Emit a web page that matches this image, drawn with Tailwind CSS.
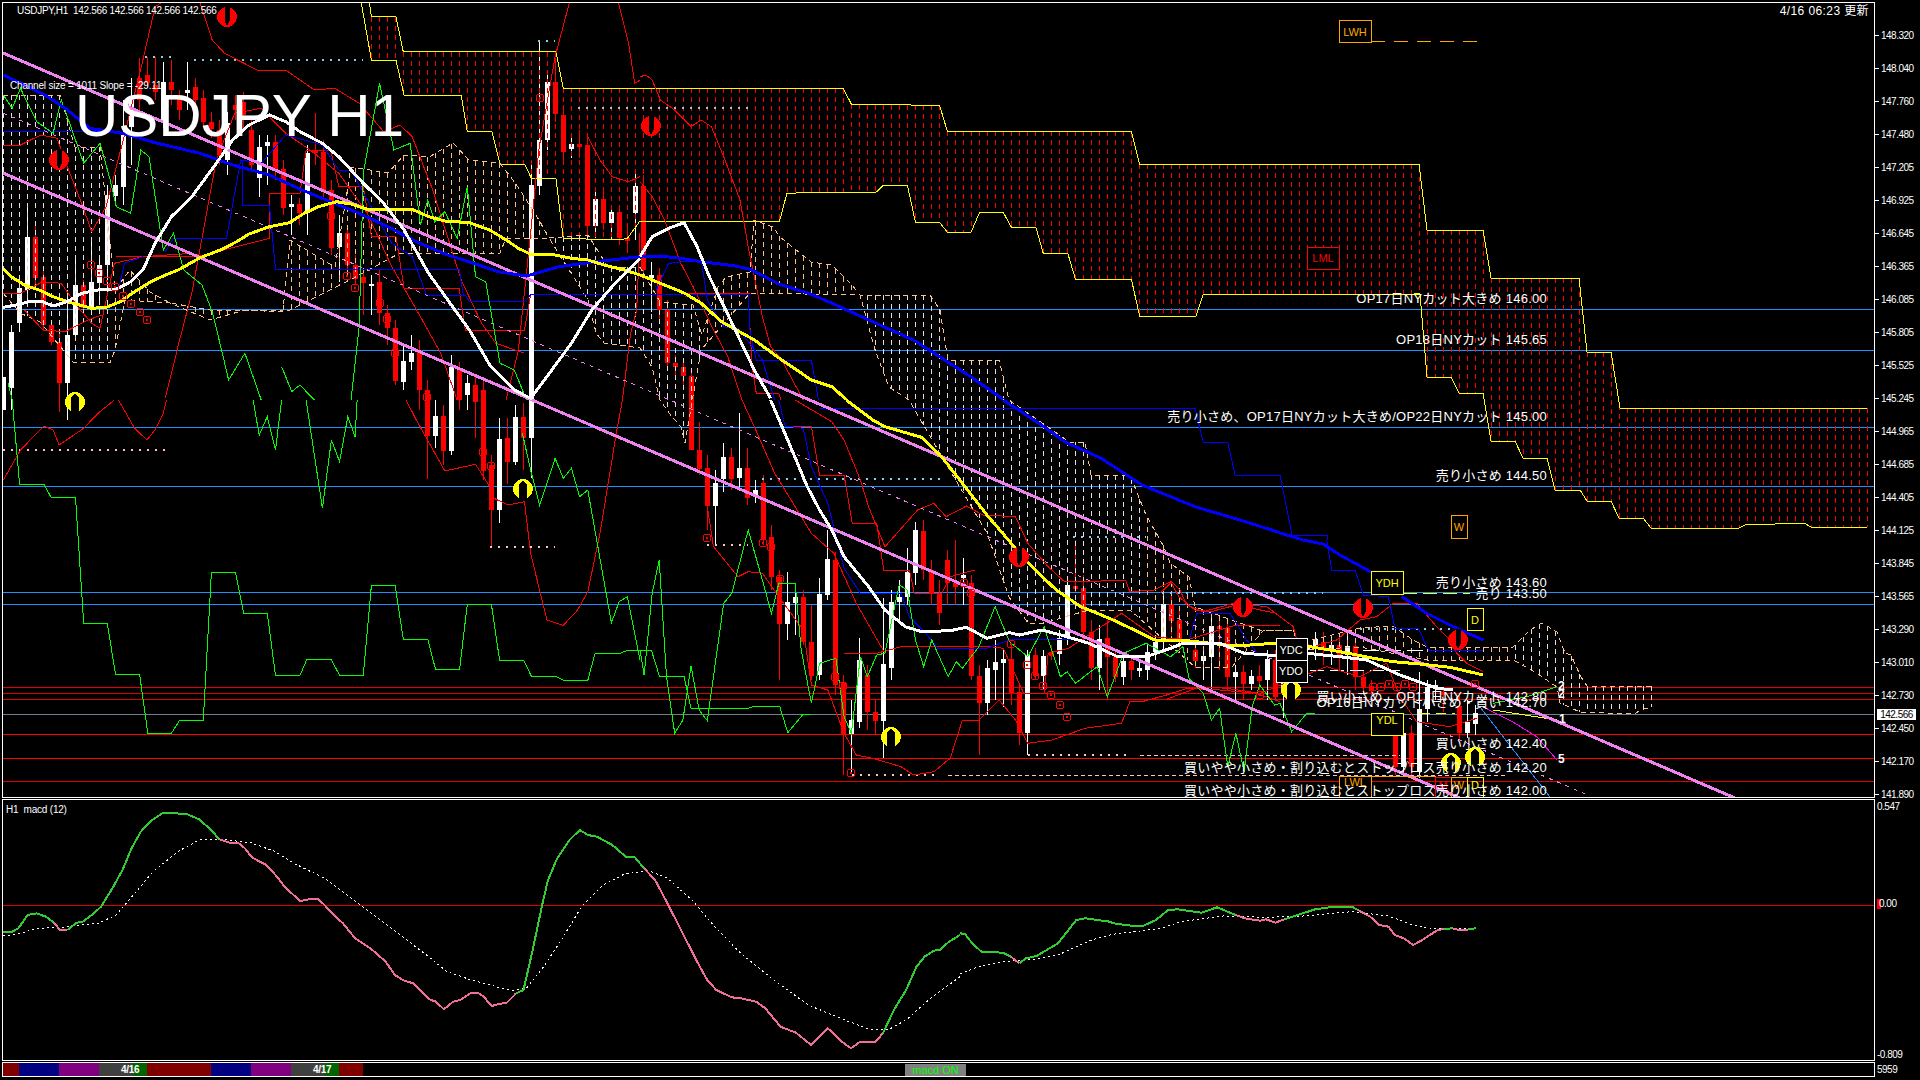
<!DOCTYPE html>
<html lang="ja">
<head>
  <meta charset="UTF-8">
  <title>USDJPY H1</title>
  <script src="https://cdn.jsdelivr.net/npm/@tailwindcss/browser@4"></script>
</head>
<body class="bg-black overflow-hidden font-['Liberation_Sans','Noto_Sans_CJK_JP',sans-serif] text-white">
  <div class="w-[1920px] h-[1080px] pt-[2px] pl-[2px] flex flex-col gap-px">

    <!-- price pane -->
    <div class="flex h-[796px]">
      <div class="w-[1873px] h-[796px] border border-white overflow-hidden">
        <svg id="price" width="1871" height="794" viewBox="3 3 1871 794" class="block [shape-rendering:crispEdges]">
          <g id="priceLayer"></g>
          <!-- boxes -->
          <g class="text-[10px]" fill="#000" stroke-width="1">
            <rect x="1339.5" y="20.5" width="32" height="22" stroke="#ffa500"/>
            <rect x="1307.5" y="247.5" width="32" height="22" stroke="#ff0000"/>
            <rect x="1451.5" y="515.5" width="16" height="23" stroke="#ffa500"/>
            <rect x="1371.5" y="571.5" width="32" height="23" stroke="#ffff00"/>
            <rect x="1467.5" y="608.5" width="16" height="22" stroke="#ffff00"/>
            <rect x="1276.5" y="638.5" width="31" height="22" stroke="#ffffff"/>
            <rect x="1276.5" y="660.5" width="31" height="22" stroke="#ffffff"/>
            <rect x="1371.5" y="713.5" width="32" height="22" stroke="#ffff00"/>
            <rect x="1339.5" y="776.5" width="32" height="24" stroke="#ffa500"/>
            <rect x="1371.5" y="776.5" width="64" height="24" fill="none" stroke="#ffa500"/>
            <rect x="1435.5" y="777.5" width="16" height="24" fill="none" stroke="#ff0000"/>
            <rect x="1451.5" y="777.5" width="16" height="24" fill="none" stroke="#ffa500"/>
            <rect x="1467.5" y="777.5" width="16" height="24" fill="none" stroke="#ffff00"/>
          </g>
          <g class="text-[11px]" text-anchor="middle">
            <text x="1355" y="36" fill="#ffa500">LWH</text>
            <text x="1323" y="262" fill="#ff0000">LML</text>
            <text x="1459" y="531" fill="#ffa500">W</text>
            <text x="1387" y="587" fill="#ffff00">YDH</text>
            <text x="1475" y="624" fill="#ffff00">D</text>
            <text x="1291" y="654" fill="#ffffff">YDC</text>
            <text x="1291" y="675" fill="#ffffff">YDO</text>
            <text x="1387" y="724" fill="#ffff00">YDL</text>
            <text x="1355" y="786" fill="#ffa500">LWL</text>
            <text x="1443" y="789" fill="#ff0000">M</text>
            <text x="1459" y="789" fill="#ffa500">W</text>
            <text x="1475" y="789" fill="#ffff00">D</text>
          </g>
          <!-- order levels -->
          <g class="text-[13px] tracking-[0.25px]" text-anchor="end" fill="#fff">
            <text x="1547" y="303">OP17日NYカット大きめ 146.00</text>
            <text x="1547" y="344">OP18日NYカット 145.65</text>
            <text x="1547" y="421">売り小さめ、OP17日NYカット大きめ/OP22日NYカット 145.00</text>
            <text x="1547" y="480">売り小さめ 144.50</text>
            <text x="1547" y="587">売り小さめ 143.60</text>
            <text x="1547" y="598">売り 143.50</text>
            <text x="1547" y="701">買い小さめ、OP17日NYカット 142.80</text>
            <text x="1547" y="707">OP16日NYカット小さめ・買い 142.70</text>
            <text x="1547" y="748">買い小さめ 142.40</text>
            <text x="1547" y="772">買いやや小さめ・割り込むとストップロス売り小さめ 142.20</text>
            <text x="1547" y="795">買いやや小さめ・割り込むとストップロス売り小さめ 142.00</text>
          </g>
          <g class="text-[12px] font-bold" fill="#fff">
            <text x="1558" y="690">2</text>
            <text x="1558" y="698">2</text>
            <text x="1559" y="723">1</text>
            <text x="1558" y="763">5</text>
          </g>
          <text x="75" y="136" fill="#fff" class="text-[60px]">USDJPY H1</text>
          <text x="10" y="89" fill="#fff" class="text-[10px] tracking-[-0.2px]">Channel size = 1011 Slope = -29.11</text>
          <text x="17" y="14" fill="#fff" class="text-[10px] tracking-[-0.3px]" xml:space="preserve">USDJPY,H1  142.566 142.566 142.566 142.566</text>
          <text x="1869" y="15" fill="#fff" text-anchor="end" class="text-[12px] tracking-[0.4px]">4/16 06:23 更新</text>
        </svg>
      </div>
      <div class="relative w-[45px] pt-[17px] text-[10px] tracking-[-0.5px] leading-none">
        <div class="flex items-center h-[33px]"><span class="w-[4px] h-px bg-white mr-[2px]"></span>148.320</div>
        <div class="flex items-center h-[33px]"><span class="w-[4px] h-px bg-white mr-[2px]"></span>148.040</div>
        <div class="flex items-center h-[33px]"><span class="w-[4px] h-px bg-white mr-[2px]"></span>147.760</div>
        <div class="flex items-center h-[33px]"><span class="w-[4px] h-px bg-white mr-[2px]"></span>147.480</div>
        <div class="flex items-center h-[33px]"><span class="w-[4px] h-px bg-white mr-[2px]"></span>147.205</div>
        <div class="flex items-center h-[33px]"><span class="w-[4px] h-px bg-white mr-[2px]"></span>146.925</div>
        <div class="flex items-center h-[33px]"><span class="w-[4px] h-px bg-white mr-[2px]"></span>146.645</div>
        <div class="flex items-center h-[33px]"><span class="w-[4px] h-px bg-white mr-[2px]"></span>146.365</div>
        <div class="flex items-center h-[33px]"><span class="w-[4px] h-px bg-white mr-[2px]"></span>146.085</div>
        <div class="flex items-center h-[33px]"><span class="w-[4px] h-px bg-white mr-[2px]"></span>145.805</div>
        <div class="flex items-center h-[33px]"><span class="w-[4px] h-px bg-white mr-[2px]"></span>145.525</div>
        <div class="flex items-center h-[33px]"><span class="w-[4px] h-px bg-white mr-[2px]"></span>145.245</div>
        <div class="flex items-center h-[33px]"><span class="w-[4px] h-px bg-white mr-[2px]"></span>144.965</div>
        <div class="flex items-center h-[33px]"><span class="w-[4px] h-px bg-white mr-[2px]"></span>144.685</div>
        <div class="flex items-center h-[33px]"><span class="w-[4px] h-px bg-white mr-[2px]"></span>144.405</div>
        <div class="flex items-center h-[33px]"><span class="w-[4px] h-px bg-white mr-[2px]"></span>144.125</div>
        <div class="flex items-center h-[33px]"><span class="w-[4px] h-px bg-white mr-[2px]"></span>143.845</div>
        <div class="flex items-center h-[33px]"><span class="w-[4px] h-px bg-white mr-[2px]"></span>143.565</div>
        <div class="flex items-center h-[33px]"><span class="w-[4px] h-px bg-white mr-[2px]"></span>143.290</div>
        <div class="flex items-center h-[33px]"><span class="w-[4px] h-px bg-white mr-[2px]"></span>143.010</div>
        <div class="flex items-center h-[33px]"><span class="w-[4px] h-px bg-white mr-[2px]"></span>142.730</div>
        <div class="flex items-center h-[33px]"><span class="w-[4px] h-px bg-white mr-[2px]"></span>142.450</div>
        <div class="flex items-center h-[33px]"><span class="w-[4px] h-px bg-white mr-[2px]"></span>142.170</div>
        <div class="flex items-center h-[33px]"><span class="w-[4px] h-px bg-white mr-[2px]"></span>141.890</div>
        <div class="absolute top-[707px] left-[2px] w-[39px] h-[11px] bg-white text-black flex items-center justify-center">142.566</div>
      </div>
    </div>

    <!-- macd pane -->
    <div class="flex h-[262px]">
      <div class="w-[1873px] h-[262px] border border-white overflow-hidden">
        <svg id="macd" width="1871" height="260" viewBox="3 800 1871 260" class="block [shape-rendering:crispEdges]">
          <g id="macdLayer"></g>
          <text x="6" y="813" fill="#fff" class="text-[10px] tracking-[-0.2px]">H1&#160; macd (12)</text>
        </svg>
      </div>
      <div class="w-[45px] relative text-[10px] tracking-[-0.5px] leading-none pl-[2px] flex flex-col justify-between pt-[3px] pb-[1px]">
        <div>0.547</div>
        <div class="flex items-center absolute top-[100px] left-[2px]"><span class="w-[4px] h-[10px] bg-[#ff0000] mr-[-2px]"></span><span class="relative">0.00</span></div>
        <div>-0.809</div>
      </div>
    </div>

    <!-- session strip -->
    <div class="flex h-[15px]">
      <div class="w-[1873px] h-[15px] border border-white flex text-[10px] font-bold leading-none relative">
        <div class="w-[16px] bg-[#800000]"></div>
        <div class="w-[40px] bg-[#000080]"></div>
        <div class="w-[40px] bg-[#800080]"></div>
        <div class="w-[34px] bg-[#404040]"></div>
        <div class="w-[14px] bg-[#006400]"></div>
        <div class="w-[64px] bg-[#800000]"></div>
        <div class="w-[40px] bg-[#000080]"></div>
        <div class="w-[40px] bg-[#800080]"></div>
        <div class="w-[34px] bg-[#404040]"></div>
        <div class="w-[14px] bg-[#006400]"></div>
        <div class="w-[24px] bg-[#800000]"></div>
        <span class="absolute left-[118px] top-[2px] tracking-[-0.3px]">4/16</span>
        <span class="absolute left-[310px] top-[2px] tracking-[-0.3px]">4/17</span>
        <div class="absolute left-[902px] top-[1px] w-[61px] h-[12px] bg-[#808080] text-[#00ff00] font-normal text-[11px] flex items-center justify-center">macd ON</div>
      </div>
      <div class="w-[45px] pl-[2px] text-[10px] tracking-[-0.5px] leading-none flex items-center">5959</div>
    </div>
  </div>

  <script>
    const NS = 'http://www.w3.org/2000/svg';
    const priceLayer = document.getElementById('priceLayer');
    const macdLayer = document.getElementById('macdLayer');

    // scale of each crop I read the coordinates from
    const Z = {
      p: [0, 0, 1, 1],
      a: [0, 0, 2.45, 3],
      b: [0, 400, 2.45, 3],
      c: [640, 400, 2.45, 3],
      d: [640, 0, 2.45, 3],
      e: [1160, 540, 3, 3],
      m: [0, 780, 1.6333, 3],
      n: [960, 780, 1.6333, 3]
    };

    function add(parent, tag, attrs) {
      const el = document.createElementNS(NS, tag);
      for (const k in attrs) el.setAttribute(k, attrs[k]);
      parent.appendChild(el);
      return el;
    }

    function conv(zone, s) {
      const [ox, oy, sx, sy] = Z[zone];
      return s.trim().split(/\s+/).map(p => {
        const [x, y] = p.split(',').map(Number);
        return [ox + x / sx, oy + y / sy];
      });
    }

    function line(parent, color, width, zone, s, dash) {
      const attrs = {
        points: conv(zone, s).map(p => p[0].toFixed(1) + ',' + p[1].toFixed(1)).join(' '),
        fill: 'none', stroke: color, 'stroke-width': width
      };
      if (dash) attrs['stroke-dasharray'] = dash;
      add(parent, 'polyline', attrs);
    }

    function interp(poly, x) {
      if (x <= poly[0][0]) return poly[0][1];
      for (let i = 1; i < poly.length; i++) {
        if (x <= poly[i][0]) {
          const [x0, y0] = poly[i - 1], [x1, y1] = poly[i];
          return y0 + (y1 - y0) * (x - x0) / (x1 - x0 || 1);
        }
      }
      return poly[poly.length - 1][1];
    }

    // horizontal levels
    [[309.5, '#1e90ff'], [350.5, '#1e90ff'], [427.5, '#1e90ff'], [486.5, '#1e90ff'], [592.5, '#1e90ff'], [604.5, '#1e90ff'],
     [687.5, '#e00000'], [693.5, '#e00000'], [699.5, '#e00000'], [714.5, '#708090'], [734.5, '#ff0000'], [758.5, '#ff0000'], [781.5, '#e00000']]
      .forEach(([y, c]) => add(priceLayer, 'line', { x1: 3, x2: 1874, y1: y, y2: y, stroke: c }));

    // candles: k, body top, body bottom, colour, wick top, wick bottom
    const candles = [
      [0,377,410,'w',377,410],[1,332,388,'w',325,410],[2,288,323,'w',282,332],[3,237,290,'w',208,300],[4,237,278,'r',225,285],
      [5,277,325,'r',270,330],[6,325,342,'r',320,345],[7,342,383,'r',330,412],[8,335,383,'w',290,420],[9,285,335,'w',255,340],
      [10,285,308,'r',280,312],[11,282,308,'w',237,315],[12,265,283,'w',255,300],[13,195,265,'w',185,290],[14,185,196,'w',175,205],
      [15,135,187,'w',100,205],[16,100,127,'w',78,165],[17,78,100,'r',58,110],[18,75,83,'r',57,88],[19,85,92,'r',57,100],
      [20,82,123,'w',62,128],[21,82,90,'r',60,105],[22,98,110,'r',90,120],[23,90,93,'w',62,110],[24,87,100,'r',78,108],
      [25,98,122,'r',90,128],[26,122,129,'r',112,138],[27,130,155,'r',120,165],[28,123,160,'w',112,175],[29,105,110,'r',95,120],
      [30,102,115,'r',92,130],[31,130,165,'r',120,172],[32,147,178,'w',135,197],[33,142,146,'w',135,185],[34,142,170,'r',135,180],
      [35,169,208,'r',160,215],[36,204,207,'w',195,235],[37,204,213,'r',198,225],[38,153,213,'w',145,235],[39,150,153,'r',113,165],
      [40,152,190,'r',140,198],[41,190,248,'r',180,255],[42,233,247,'w',215,282],[43,233,265,'r',225,275],[44,265,279,'r',255,285],
      [45,277,283,'r',270,315],[46,284,286,'w',275,315],[47,282,313,'r',270,325],[48,313,328,'r',305,345],[49,328,381,'r',320,385],
      [50,361,382,'w',345,390],[51,353,362,'w',335,370],[52,350,390,'r',340,410],[53,390,436,'r',380,479],[54,416,436,'w',400,448],
      [55,416,451,'r',405,465],[56,367,451,'w',355,455],[57,370,400,'r',362,410],[58,383,395,'w',375,410],[59,385,402,'r',375,438],
      [60,390,471,'r',380,480],[61,465,510,'r',455,546],[62,439,510,'w',418,523],[63,438,462,'r',418,484],[64,417,462,'w',405,465],
      [65,417,438,'r',403,470],[66,185,438,'w',160,478],[67,140,186,'w',40,195],[68,82,140,'w',70,150],[69,82,114,'r',58,122],
      [70,115,152,'r',105,160],[71,144,149,'w',133,158],[72,144,147,'r',130,158],[73,145,226,'r',135,236],[74,199,226,'w',190,238],
      [75,199,223,'r',190,230],[76,212,223,'w',205,240],[77,212,238,'r',205,245],[78,238,241,'r',225,253],[79,186,213,'w',170,240],
      [80,186,270,'r',175,280],[81,275,278,'w',262,312],[82,275,310,'r',268,320],[83,310,363,'r',300,370],[84,363,367,'r',355,375],
      [85,367,376,'r',360,385],[86,376,450,'r',370,445],[87,450,469,'r',422,475],[88,468,506,'r',455,530],[89,483,506,'w',470,545],
      [90,457,479,'w',443,492],[91,457,479,'r',448,490],[92,468,478,'w',413,488],[93,468,498,'r',448,505],[94,490,497,'w',480,503],
      [95,483,540,'r',475,545],[96,537,577,'r',525,590],[97,577,624,'r',570,680],[98,602,624,'w',572,640],[99,597,603,'w',590,635],
      [100,597,642,'r',590,645],[101,642,676,'r',605,680],[102,594,675,'w',578,680],[103,559,595,'w',530,600],[104,560,685,'r',552,695],
      [105,683,734,'r',675,775],[106,720,734,'w',700,772],[107,660,722,'w',638,728],[108,675,712,'r',665,730],[109,712,721,'r',700,735],
      [110,664,721,'w',598,758],[111,602,668,'w',590,680],[112,597,602,'w',580,620],[113,572,597,'w',548,605],[114,530,573,'w',522,585],
      [115,531,570,'r',520,580],[116,570,594,'r',560,605],[117,594,613,'r',580,625],[118,560,583,'r',550,605],[119,583,587,'r',540,605],
      [120,575,578,'w',558,605],[121,583,676,'r',575,680],[122,676,703,'r',665,755],[123,668,703,'w',660,715],[124,662,670,'w',640,700],
      [125,659,663,'w',648,707],[126,659,693,'r',645,705],[127,692,733,'r',685,745],[128,655,733,'w',650,755],[129,655,676,'r',648,680],
      [130,656,676,'w',650,690],[131,652,656,'r',645,660],[132,638,654,'w',630,665],[133,585,638,'w',580,645],[134,586,589,'r',540,592],
      [135,588,632,'r',575,640],[136,632,668,'r',620,680],[137,639,668,'w',625,690],[138,638,657,'r',620,700],[139,657,677,'r',650,682],
      [140,661,677,'w',655,685],[141,661,670,'r',655,680],[142,668,671,'w',660,677],[143,652,670,'w',645,680],[144,642,652,'w',635,660],
      [145,604,642,'w',595,650],[146,604,621,'r',595,635],[147,620,642,'r',610,650],[149,650,661,'r',640,668],[150,656,661,'w',650,680],
      [151,626,657,'w',618,690],[152,626,629,'r',620,670],[153,628,677,'r',620,690],[154,672,677,'w',665,700],[155,672,684,'r',665,700],
      [156,676,684,'w',670,690],[157,676,681,'r',665,690],[158,659,680,'w',650,700],[159,660,697,'r',650,700],[160,678,692,'w',670,718],
      [161,680,695,'r',670,700],[163,647,650,'w',640,655],[164,639,646,'w',632,660],[165,642,648,'r',632,665],[166,645,650,'w',635,665],
      [167,645,657,'r',638,670],[168,646,655,'w',630,675],[169,646,677,'r',640,690],[170,677,688,'r',670,695],[171,686,691,'r',680,695],
      [174,725,767,'r',715,775],[175,733,767,'w',725,775],[176,733,767,'r',725,775],[177,709,772,'w',672,778],[178,687,709,'w',680,722],
      [179,685,688,'w',680,700],[180,692,695,'r',688,712],[182,706,733,'r',695,740],[183,722,733,'w',700,738],[184,713,724,'w',705,735]
    ];
    candles.forEach(([k, t, b, c, wt, wb]) => {
      const x = 3 + 8 * k, col = c === 'w' ? '#ffffff' : '#ff0000';
      add(priceLayer, 'line', { x1: x + 0.5, x2: x + 0.5, y1: wt, y2: wb, stroke: col });
      add(priceLayer, 'rect', { x: x - 2, y: t, width: 5, height: Math.max(b - t, 2), fill: col });
    });

    // future cloud
    const cloudUpper = conv('a', '905,8 910,50 970,50 988,155 1362,155 1380,265')
      .concat(conv('d', '0,265 498,265 518,313 734,316 753,394 1204,394 1224,492'))
      .concat(conv('p', '1419,164 1427,230 1483,230 1491,278 1579,278 1587,352 1611,352 1620,408 1867,408'));
    const cloudLower = conv('a', '885,8 910,180 970,180 990,285 1130,285 1145,395 1205,395 1225,492 1285,492 1302,535 1362,535 1380,715 1517,720 1537,715 1568,663')
      .concat(conv('d', '0,663 342,663 360,580 430,577 578,577 597,555 655,555 675,667 734,667 753,697 811,697 832,637 890,637 910,682 970,682 988,760 1048,760 1067,838 1204,838 1224,948 1362,948 1380,883 1568,883'))
      .concat(conv('p', '1420,294 1427,377 1451,377 1459,393 1483,393 1491,441 1515,441 1523,458 1547,458 1555,490 1580,490 1587,501 1611,501 1619,518 1643,518 1651,528 1739,528 1747,524 1775,524 1804,523 1811,527 1867,527'));
    for (let k = 45; k <= 233; k++) {
      const x = 3 + 8 * k + 0.5;
      if (x < 365) continue;
      const y1 = interp(cloudUpper, x), y2 = interp(cloudLower, x);
      if (y2 - y1 > 3) add(priceLayer, 'line', { x1: x, x2: x, y1: y1, y2: y2, stroke: '#ff0000', 'stroke-dasharray': '5 4' });
    }
    const ptsOf = poly => poly.map(p => p.join(',')).join(' ');
    add(priceLayer, 'polyline', { points: ptsOf(cloudUpper), fill: 'none', stroke: '#ffff00', 'stroke-width': 1 });
    add(priceLayer, 'polyline', { points: ptsOf(cloudLower), fill: 'none', stroke: '#ffff00', 'stroke-width': 1 });

    // past cloud, dashed verticals between two edges
    const pastTop = conv('p', '3,95 60,95 75,147 100,147 115,290 130,270 150,292 170,303 210,310 245,310 283,310 290,240 335,267 351,167 388,173 404,155 429,157 453,143 469,160 500,163 518,187 539,220 549,238 588,235 608,267 640,267 660,302 693,305 702,335 718,287 726,277 750,272 754,220 773,227 780,237 811,262 832,265 852,285 860,295 930,295 940,310 948,360 999,360 1009,400 1048,427 1069,442 1085,442 1091,475 1130,475 1146,515 1164,547 1170,563 1189,577 1195,607 1260,630 1293,630 1300,643 1360,628 1393,626 1413,640 1427,647 1513,647 1530,630 1542,623 1557,632 1565,653 1571,655 1581,677 1587,686 1652,686');
    const pastBot = conv('p', '3,293 20,313 40,322 73,362 110,363 115,350 125,300 170,303 210,320 245,310 283,312 290,310 350,280 400,253 500,253 506,238 549,238 588,300 596,333 604,343 640,348 652,367 660,400 669,413 681,427 685,443 701,350 750,293 860,295 875,350 889,387 909,400 938,450 987,533 1009,597 1028,623 1044,623 1089,610 1130,610 1195,667 1232,667 1264,630 1293,630 1300,650 1360,647 1427,660 1513,660 1535,672 1557,687 1560,703 1580,712 1635,714 1640,710 1652,707');
    const pastColor = x => (x < 115 || (x >= 549 && x < 700) || (x >= 860 && x < 1146) || (x >= 1510)) ? '#e8dcdc' : '#ffc080';
    for (let k = 0; k <= 206; k++) {
      const x = 3 + 8 * k + 0.5;
      const y1 = interp(pastTop, x), y2 = interp(pastBot, x);
      if (y2 - y1 > 4) add(priceLayer, 'line', { x1: x, x2: x, y1: y1, y2: y2, stroke: pastColor(x), 'stroke-dasharray': '5 4' });
    }
    add(priceLayer, 'polyline', { points: ptsOf(pastTop), fill: 'none', stroke: '#ffc080', 'stroke-dasharray': '5 4' });
    add(priceLayer, 'polyline', { points: ptsOf(pastBot), fill: 'none', stroke: '#ffc080', 'stroke-dasharray': '5 4' });

    // dotted highs and lows
    [[145,171,57,'#87ceeb'],[194,363,60,'#87ceeb'],[538,555,41,'#87ceeb'],[578,748,108,'#87ceeb'],[762,946,479,'#87ceeb'],[1073,1146,537,'#87ceeb'],[1162,1323,593,'#87ceeb'],[1360,1456,629,'#87ceeb'],
     [3,170,450,'#ffc0cb'],[490,555,547,'#ffc0cb'],[707,748,545,'#ffc0cb'],[1028,1130,755,'#ffc0cb'],[852,938,775,'#ffc0cb']]
      .forEach(([x1, x2, y, c]) => add(priceLayer, 'line', { x1: x1, x2: x2, y1: y, y2: y, stroke: c, 'stroke-width': 2, 'stroke-dasharray': '2 6' }));
    add(priceLayer, 'line', { x1: 1140, x2: 1400, y1: 755.5, y2: 755.5, stroke: '#ffc0cb', 'stroke-dasharray': '4 3' });
    add(priceLayer, 'line', { x1: 948, x2: 1507, y1: 775.5, y2: 775.5, stroke: '#ffc0cb', 'stroke-dasharray': '4 3' });
    add(priceLayer, 'line', { x1: 1403, x2: 1470, y1: 593.5, y2: 593.5, stroke: '#ffff00', 'stroke-dasharray': '14 6' });
    add(priceLayer, 'line', { x1: 1371, x2: 1482, y1: 41.5, y2: 41.5, stroke: '#ffa500', 'stroke-dasharray': '14 9' });
    add(priceLayer, 'line', { x1: 1363, x2: 1430, y1: 650.5, y2: 650.5, stroke: '#fff', 'stroke-dasharray': '16 6' });
    add(priceLayer, 'line', { x1: 1310, x2: 1400, y1: 670.5, y2: 670.5, stroke: '#fff', 'stroke-dasharray': '14 6' });
    add(priceLayer, 'line', { x1: 1420, x2: 1455, y1: 713.5, y2: 713.5, stroke: '#ffff00', 'stroke-dasharray': '10 6' });

    // thin red lines
    const R = '#ff0000';
    line(priceLayer, R, 1, 'a', '8,435 50,435 100,405 140,415 165,500 200,610 225,695 260,620 300,430 350,180 380,20 395,8');
    line(priceLayer, R, 1, 'a', '490,8 520,120 550,160 630,210 700,210 770,270 820,265 880,310 940,395 980,375 1010,410 1060,570 1130,840 1180,970 1215,1030 1285,1060');
    line(priceLayer, R, 1, 'a', '405,1195 440,1020 470,880 500,680 530,480 575,340 640,325 700,400 760,450 830,520 900,640 960,800 1030,950 1080,1060 1120,1200');
    line(priceLayer, R, 1, 'a', '8,880 50,880 105,845 150,850 190,920 225,970 245,985 280,790 350,770 470,760 500,770');
    line(priceLayer, R, 1, 'a', '60,930 105,990 160,995 215,960 250,945');
    line(priceLayer, R, 1, 'a', '283,768 490,768 660,715 660,580 735,580 750,450 810,450 830,560 890,560 910,708 970,708 990,865 1125,865 1140,990 1285,990 1300,885');
    line(priceLayer, R, 1, 'a', '1395,8 1360,170 1320,450 1300,700 1270,1050 1240,1200');
    line(priceLayer, R, 1, 'a', '1515,8 1540,130 1555,250 1568,240');
    line(priceLayer, R, 1, 'a', '1440,410 1470,480 1500,530 1540,545 1568,530');
    line(priceLayer, R, 1, 'b', '8,240 50,150 108,78 130,90 145,135 205,85 240,40 280,0');
    line(priceLayer, R, 1, 'b', '290,0 330,85 360,120 380,90 400,40 408,0');
    line(priceLayer, R, 1, 'b', '995,0 1020,60 1090,213 1165,193 1200,260 1205,292 1245,315 1285,305 1300,460 1340,660 1380,676 1415,630 1440,575 1470,400 1510,100 1525,0');
    line(priceLayer, R, 1, 'a', '1525,1200 1545,1000 1560,930 1568,700');
    line(priceLayer, R, 1, 'd', '0,230 15,225 30,240 50,300 85,330 125,380 150,360 175,380 205,470 245,600 265,740 300,950 320,1040 345,1075 400,1200');
    line(priceLayer, R, 1, 'd', '0,545 30,590 60,660 100,790 130,860 180,990 215,1070 250,1200');
    line(priceLayer, R, 1, 'd', '270,880 120,880 110,890');
    line(priceLayer, R, 1, 'd', '265,885 275,1100 285,1180 340,1180 345,1200');
    line(priceLayer, R, 1, 'c', '250,0 280,80 330,220 420,400 475,460 530,610 600,760');
    line(priceLayer, R, 1, 'c', '380,0 470,65 500,120 540,240 560,320 600,440 680,330 720,310 750,350 800,318 840,345 920,350 950,430 1000,500 1040,545 1090,545 1190,540 1200,575 1260,570 1300,545 1320,590 1360,630 1400,635 1460,615 1560,640');
    line(priceLayer, R, 1, 'c', '165,320 180,440 240,530 265,515 300,520 340,590 400,690 420,855');
    line(priceLayer, R, 1, 'c', '420,855 460,870 500,1000 530,1065 570,1075 640,1100 670,1125 720,1115 760,1075 790,960 830,960 880,900 920,960 950,1030 1010,1020 1090,985 1180,970 1200,905 1230,905 1290,885 1340,865 1420,870 1510,880 1568,905');
    line(priceLayer, R, 1, 'c', '360,80 420,80 440,225 500,225 520,370 580,370 597,510 660,510 672,580 740,580 760,530 820,510');
    line(priceLayer, R, 1, 'c', '500,760 580,760 640,740 860,740 890,745 940,880 990,880 1000,760 1050,745 1180,640 1260,710 1340,720 1460,675 1568,675');
    line(priceLayer, R, 1, 'e', '0,160 35,125 60,150 80,195 130,215 220,190 320,200 400,260 410,300 460,320 530,300 600,240 650,230 700,190 770,190 830,260 870,300 890,340 920,370 970,395');
    line(priceLayer, R, 1, 'e', '20,478 120,440 200,445 300,460 400,420 500,380 600,410 680,370 720,470 770,545 870,560 950,535');

    // blue thin
    const B = '#0000ff';
    line(priceLayer, B, 1, 'a', '8,395 285,395');
    line(priceLayer, B, 1, 'a', '290,870 305,790 350,770');
    line(priceLayer, B, 1, 'a', '405,755 425,715 555,715 590,480 640,490 700,405 790,435 830,510 860,510 900,600 960,730 1010,770 1045,885 1140,885 1150,905 1285,905 1300,885 1568,883');
    line(priceLayer, B, 1, 'a', '595,480 595,615 660,615 675,808 1125,808 1135,885');
    line(priceLayer, B, 1, 'd', '0,883 265,883 270,1000 285,1080 420,1080 437,1200');
    line(priceLayer, B, 1, 'd', '40,870 70,790 150,780 165,900 205,980 240,985 300,1080 330,1200');
    line(priceLayer, B, 1, 'c', '340,0 355,78 400,85 420,200 460,310 500,505 540,580 640,580 660,650 700,700 730,745 850,745 910,718 1060,718');
    line(priceLayer, B, 1, 'c', '440,25 1360,25 1380,127 1440,127 1458,225 1568,225');
    line(priceLayer, B, 1, 'p', '1270,475 1280,475 1292,535 1327,535 1327,540');
    line(priceLayer, B, 1, 'e', '500,0 515,90 585,90 610,165 685,170 705,265 775,265 805,330 970,330');
    line(priceLayer, B, 1, 'e', '85,310 110,220 210,220 260,300 300,350');

    // chikou
    const G = '#00ff00';
    line(priceLayer, G, 1, 'a', '8,285 30,325 50,265 90,365 130,400 150,300 165,350 205,490 245,430 270,540 285,620 320,640 345,450 365,470 400,750 425,700 450,810 495,855 520,935 545,1060 560,1140 600,1060 640,1200');
    line(priceLayer, G, 1, 'a', '690,1100 715,1175 735,1155 770,1200');
    line(priceLayer, G, 1, 'a', '860,1200 880,980 890,520 930,250 965,450 1005,430 1030,675 1048,600 1065,665 1090,635 1120,715 1145,560 1165,830 1190,845 1225,1090 1260,1110 1290,1200');
    line(priceLayer, G, 1, 'a', '20,1150 30,1200');
    line(priceLayer, G, 1, 'b', '30,0 48,253 108,253 125,292 185,292 205,670 263,670 283,823 342,823 362,1000 420,1000 440,961 498,961 518,517 577,517 597,640 655,640 675,826 735,826 752,778 811,778 832,826 890,826 910,556 968,556 988,718 1048,718 1067,808 1126,808 1145,613 1204,613 1224,781 1283,781 1302,829 1362,829 1381,841 1440,841 1458,760 1520,760 1537,751 1568,751');
    line(priceLayer, G, 1, 'b', '620,0 635,105 655,50 675,150 690,0');
    line(priceLayer, G, 1, 'b', '750,0 790,325 812,120 832,185 852,50 870,110 875,0');
    line(priceLayer, G, 1, 'b', '1280,100 1300,210 1322,315 1360,175 1380,235 1400,205 1420,290 1440,270 1498,668 1517,605 1537,590 1568,780');
    line(priceLayer, G, 1, 'c', '0,750 10,825 30,580 47,480 65,830 85,1000 105,960 125,798 145,930 165,962 205,610 225,580 265,390 300,540 322,640 340,550 380,550 395,750 420,910 440,790 480,775 500,950 518,1000 540,770 557,830 580,765 600,760 635,555 655,570 675,720 695,800 715,720 755,830 775,785 790,805 830,740 870,620 905,725 950,770 990,680 1030,830 1047,815 1067,850 1120,800 1145,890 1185,760 1240,730 1300,770 1330,740 1345,835 1380,880 1400,960 1420,925 1440,1100 1460,1000 1480,1115 1500,920 1518,855 1555,915 1568,910');
    line(priceLayer, G, 1, 'c', '0,751 28,751 48,830 108,830 125,925 265,925 280,918 342,918 362,998 400,942 420,942');
    line(priceLayer, G, 1, 'e', '360,490 395,575 440,520 465,520');
    line(priceLayer, G, 1, 'e', '1000,490 1100,470 1190,440');

    // right of the last bar
    line(priceLayer, '#1e90ff', 1, 'p', '1480,707 1550,797');
    line(priceLayer, '#ff00ff', 1, 'p', '1483,707 1513,722 1537,737 1557,760');
    line(priceLayer, '#ffff00', 1, 'e', '1000,510 1190,540');

    // channel
    line(priceLayer, '#ee82ee', 1, 'p', '3,113 1590,796', '4 5');
    line(priceLayer, '#ee82ee', 3, 'p', '3,53 1735,798');
    line(priceLayer, '#ee82ee', 3, 'p', '3,173 1460,798');

    // moving averages
    line(priceLayer, B, 3, 'a', '8,225 60,255 110,285 160,325 220,385 300,400 380,428 490,460 570,495 660,525 740,570 810,605 880,640 950,680 1020,725 1090,762 1160,790 1220,815 1290,828 1370,800 1460,785 1568,770');
    line(priceLayer, B, 3, 'd', '0,770 50,768 100,775 150,785 230,797 270,808 340,852 420,883 480,915 570,965 670,1020 740,1075 810,1130 890,1198');
    line(priceLayer, B, 3, 'c', '890,0 990,80 1040,125 1130,175 1230,255 1360,320 1470,360 1568,398');
    line(priceLayer, B, 3, 'p', '1280,533 1303,540');
    line(priceLayer, B, 3, 'e', '430,0 490,12 540,45 640,100');
    line(priceLayer, B, 3, 'e', '725,170 800,220 880,260 970,300');
    const Y = '#ffff00';
    line(priceLayer, Y, 3, 'a', '8,808 30,832 60,855 100,872 130,890 165,905 195,915 225,925 260,922 295,905 330,875 370,845 400,828 440,808 490,773 540,750 580,725 610,702 660,680 710,668 745,640 780,620 825,605 860,612 900,628 950,628 1010,628 1050,650 1090,663 1150,668 1200,690 1240,720 1270,745 1300,763 1360,765 1400,775 1440,780 1480,795 1530,810 1568,825');
    line(priceLayer, Y, 3, 'd', '0,825 50,850 110,880 150,910 200,965 280,1020 345,1078 420,1140 470,1160 505,1198');
    line(priceLayer, Y, 3, 'c', '505,0 570,60 600,80 690,112 740,172 790,250 850,345 920,445 960,500 1020,570 1080,620 1150,655 1220,695 1265,722 1340,722 1420,733 1460,738 1520,733 1568,728');
    line(priceLayer, Y, 3, 'e', '360,306 390,312 450,320 540,335 640,355 700,365 780,372 870,382 970,405');
    const W = '#ffffff';
    line(priceLayer, W, 3, 'a', '8,922 40,915 70,905 100,903 130,918 165,905 200,880 240,870 285,868 320,845 350,810 380,730 420,650 470,590 530,490 570,420 610,375 660,345 700,365 735,395 790,430 830,470 890,550 940,610 990,690 1050,820 1100,905 1150,990 1200,1095 1260,1170 1300,1195 1340,1130 1400,1030 1450,930 1500,860 1568,775');
    line(priceLayer, W, 3, 'd', '0,770 30,710 70,685 108,668 140,740 170,830 210,930 245,1020 280,1110 320,1195');
    line(priceLayer, W, 3, 'c', '320,0 355,100 410,260 440,330 470,390 500,470 560,560 600,630 650,680 690,695 760,692 800,682 850,715 905,698 930,705 985,690 1040,708 1100,730 1170,770 1240,770 1300,745 1330,730 1420,730 1480,760 1568,768');
    line(priceLayer, W, 3, 'e', '360,348 440,340 540,350 620,360 720,405 830,445 880,450');

    // small reversal circles
    [[91,265],[99,273],[107,281],[115,287],[123,296],[131,304],[140,312],[147,320],[331,216],[347,276],[355,288],[380,303],[387,319],[395,353],[427,397],[540,98],
     [483,452],[491,466],[707,538],[763,543],[771,547],[780,579],[835,677],[843,686],[851,773],[964,583],[971,593],[1011,644],[1027,665],[1035,676],[1043,686],[1051,695],[1060,705],[1067,717],[1260,695],
     [1373,687],[1381,687],[1389,684],[1397,687],[1405,684],[1413,687],[1475,684]]
      .forEach(([x, y]) => {
        add(priceLayer, 'circle', { cx: x, cy: y, r: 4, fill: 'none', stroke: '#ff0000', 'stroke-width': 1 });
        add(priceLayer, 'rect', { x: x - 1, y: y - 1, width: 2, height: 2, fill: '#ff0000' });
      });

    // circled arrows: open slit towards the tail, pointed at the head
    function arrow(x, y, color, up) {
      const s = up ? 1 : -1, w = up ? 4 : 2.5;
      add(priceLayer, 'circle', { cx: x, cy: y, r: 10, fill: color });
      const p = [[-w, 11], [-w, -4], [0, -8.5], [w, -4], [w, 11]]
        .map(([a, b]) => (x + a) + ',' + (y + b * s)).join(' ');
      add(priceLayer, 'polygon', { points: p, fill: '#000' });
    }
    [[227,17],[59,160],[651,126],[1019,557],[1243,607],[1363,608],[1458,640]].forEach(([x, y]) => arrow(x, y, '#ff0000', false));
    [[75,402],[523,489],[891,737],[1291,690],[1027,807],[1451,763],[1475,757]].forEach(([x, y]) => arrow(x, y, '#ffff00', true));

    // macd
    add(macdLayer, 'line', { x1: 3, x2: 1874, y1: 905.5, y2: 905.5, stroke: '#e00000' });
    const GR = '#32cd32', PK = '#ee6e9c';
    line(macdLayer, W, 1, 'm', '5,468 30,462 60,445 100,442 160,430 190,405 220,340 250,275 290,215 325,180 360,178 410,188 450,215 480,250 530,295 570,350 610,405 650,460 700,530 730,575 770,600 800,615 835,632 860,625 890,555 920,470 950,380 985,315 1020,282 1060,272 1090,295 1130,360 1170,445 1210,520 1260,595 1320,675 1380,720 1420,748 1450,750 1480,720 1520,655 1568,590', '2 3');
    line(macdLayer, W, 1, 'n', '0,582 30,560 70,545 120,538 160,525 215,480 250,463 330,445 360,425 430,408 500,412 560,408 640,395 700,408 740,435 770,445 840,445', '2 3');
    [
      [GR,'m','5,455 20,455 30,445 45,405 60,400 75,410 88,428'],
      [PK,'m','88,428 98,450 110,450'],
      [GR,'m','110,450 125,428 135,425 150,405 165,380 185,320 200,270 215,205 230,155 245,125 265,100 285,100 305,102 325,118 345,150 358,178'],
      [PK,'m','358,178 375,188 390,190 400,205 412,233 435,255 450,285 465,320 490,363 505,358 520,358 530,375 545,405 560,430 580,475 605,505 630,545 645,585 660,602 675,610 700,657 712,665 725,688 740,665 752,660 770,638 780,638 790,650 803,678 815,672 828,668 843,640'],
      [GR,'m','843,640 855,630 870,510 885,380 895,300 910,235 930,180 947,150 960,165 975,170 1000,195 1022,230 1036,230 1052,265'],
      [PK,'m','1052,265 1070,300 1090,370 1115,460 1140,550 1155,600 1170,630 1195,652 1210,655 1235,665 1250,685 1275,740 1300,758 1325,795 1352,745 1375,785 1390,805 1405,785 1430,785 1442,760'],
      [GR,'m','1442,760 1460,690 1480,630 1497,560 1510,530 1525,512 1535,510 1550,485 1568,465'],
      [GR,'n','0,460 8,462 20,490 35,515 70,518 83,530'],
      [PK,'n','83,530 97,550'],
      [GR,'n','97,550 108,535 125,528 160,490 190,420 205,415 245,425 250,430 280,437 300,437 320,420 340,390 355,388 395,398 420,382 450,405'],
      [PK,'n','450,405 465,415 490,422 500,418 515,428 530,418'],
      [GR,'n','530,418 580,388 610,380 640,380 650,390'],
      [PK,'n','650,390 670,410 685,435 700,440 710,465 725,475 740,495 755,480 780,450 790,447'],
      [GR,'n','790,447 805,445'],
      [PK,'n','805,448 830,450'],
      [GR,'n','830,448 843,445']
    ].forEach(([c, z, s]) => line(macdLayer, c, 2, z, s));
  </script>
</body>
</html>
